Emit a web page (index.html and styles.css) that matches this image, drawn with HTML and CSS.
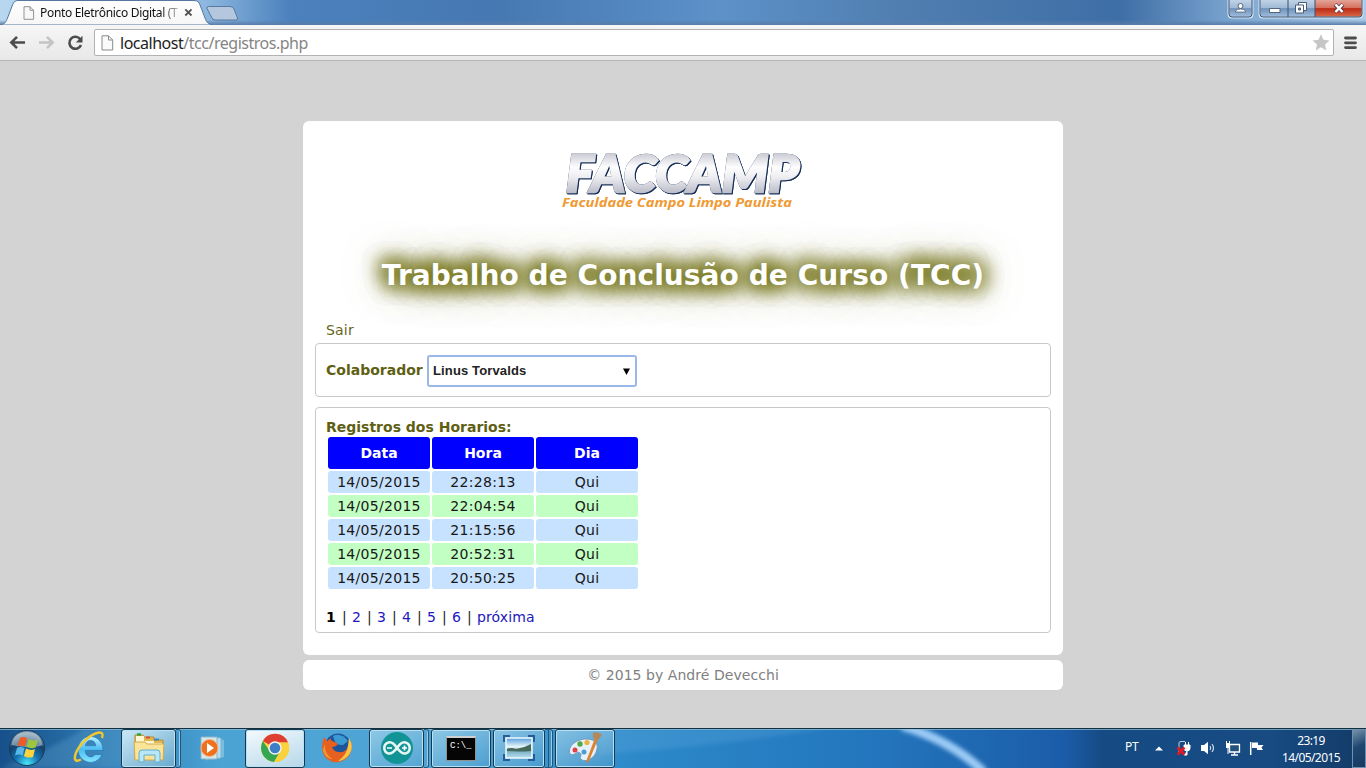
FILE: index.html
```html
<!DOCTYPE html>
<html lang="pt-BR">
<head>
<meta charset="utf-8">
<title>Ponto Eletrônico Digital (TCC)</title>
<link rel="stylesheet" href="styles.css">
</head>
<body>
<header class="browser">
  <div class="tabstrip">
    <svg class="tab-shape" width="245" height="25" viewBox="0 0 245 25">
      <defs>
        <linearGradient id="tabFill" x1="0" y1="0" x2="0" y2="1"><stop offset="0" stop-color="#fff"/><stop offset="1" stop-color="#f6f6f6"/></linearGradient>
      </defs>
      <path d="M0 25C5 24 6 22 7.500 18L12.500 5C13.500 2 15 .5 18 .5H194C197.500 .5 199 2 200 5L205 18C206.500 22 207.500 24 213 25Z" fill="url(#tabFill)" stroke="#56779f"/>
      <path d="M208.500 6.500H230Q233 6.500 234 9L237.500 18Q238 20 235.500 20H215Q212.500 20 211.500 17L207 8.500Q206.500 6.500 208.500 6.500Z" fill="#b4c7de" stroke="#58789f"/>
    </svg>
    <div class="tab">
      <svg width="12" height="14" viewBox="0 0 12 14"><path d="M1 .7H7L10.600 4.300V13.300H1ZM7 .7V4.300H10.600" fill="#f8f8f8" stroke="#929292"/></svg>
      <span class="tab-title">Ponto Eletrônico Digital (T</span>
      <svg class="tab-close" width="9" height="9" viewBox="0 0 9 9"><path d="M1.300 1.300L7.500 7.500M7.500 1.300L1.300 7.500" stroke="#555" stroke-width="1.900"/></svg>
    </div>
    <svg class="caption" width="140" height="19" viewBox="0 0 140 19">
      <defs>
        <linearGradient id="glass" x1="0" y1="0" x2="0" y2="1"><stop offset="0" stop-color="#c5d6e9"/><stop offset=".48" stop-color="#9fb9d6"/><stop offset=".52" stop-color="#6f92bb"/><stop offset="1" stop-color="#a6c2df"/></linearGradient>
        <linearGradient id="close" x1="0" y1="0" x2="0" y2="1"><stop offset="0" stop-color="#e3a397"/><stop offset=".48" stop-color="#d5705d"/><stop offset=".52" stop-color="#bd2b15"/><stop offset="1" stop-color="#d86748"/></linearGradient>
      </defs>
      <path d="M2.500 -1V14Q2.500 17.500 6 17.500H23Q26.500 17.500 26.500 14V-1Z" fill="url(#glass)" stroke="#d6e6f5" stroke-width="2"/>
      <path d="M3 -1V14Q3 17 6 17H23Q26 17 26 14V-1" fill="none" stroke="#354f70"/>
      <path d="M33.500 -1V14Q33.500 17.500 37 17.500H133Q136.500 17.500 136.500 14V-1Z" fill="url(#glass)" stroke="#d6e6f5" stroke-width="2"/>
      <path d="M89 0H135.500V13.500Q135.500 16.500 132.500 16.500H89Z" fill="url(#close)"/>
      <path d="M34 -1V14Q34 17 37 17H133Q136 17 136 14V-1M62 0V17M89 0V17" fill="none" stroke="#3c526e"/>
      <circle cx="14.500" cy="6" r="2.500" fill="#fff" stroke="#53657d"/><path d="M9.500 12V11Q11 9 14.500 9Q18 9 19.500 11V12Z" fill="#fff" stroke="#53657d" stroke-width=".8"/>
      <path d="M43.500 8.500H54V12.500H43.500Z" fill="#fff" stroke="#53657d"/>
      <path d="M72.500 2.500H80.500V10.500H72.500Z" fill="#fff" stroke="#485c76"/><path d="M69.500 5H77.500V13H69.500Z" fill="#fff" stroke="#485c76"/><path d="M72.500 8H74.500V10H72.500Z" fill="#7893b1" stroke="#485c76"/>
      <path d="M109 4.500L117 12M117 4.500L109 12" stroke="#633c45" stroke-width="4.200"/><path d="M109.500 4.500L116.500 12M116.500 4.500L109.500 12" stroke="#fff" stroke-width="2.500"/>
    </svg>
  </div>
  <nav class="toolbar">
    <svg class="nav-icon" width="17" height="15" viewBox="0 0 17 15"><path d="M16 7.500H3M8 1.800L2.300 7.500L8 13.200" fill="none" stroke="#4c4c4c" stroke-width="2.600"/></svg>
    <svg class="nav-icon" width="17" height="15" viewBox="0 0 17 15"><path d="M1 7.500H14M9 1.800L14.700 7.500L9 13.200" fill="none" stroke="#c4c4c4" stroke-width="2.600"/></svg>
    <svg class="nav-icon" width="17" height="16" viewBox="0 0 17 16"><path d="M13.300 4.300A6 6 0 1 0 14 10" fill="none" stroke="#4c4c4c" stroke-width="2.600"/><path d="M15.500 .8V7.500H8.800Z" fill="#4c4c4c"/></svg>
    <div class="address">
      <svg width="13" height="16" viewBox="0 0 13 16"><path d="M1 .8H7.500L11.700 5V15H1ZM7.500 .8V5H11.700" fill="#fafafa" stroke="#8a8a8a"/></svg>
      <span class="url"><b>localhost</b>/tcc/registros.php</span>
      <svg class="star" width="18" height="17" viewBox="0 0 18 17"><path d="M9 .3L11.500 5.800L17.500 6.400L13 10.500L14.300 16.500L9 13.300L3.700 16.500L5 10.500L.5 6.400L6.500 5.800Z" fill="#c6c6c6"/></svg>
    </div>
    <svg class="menu" width="13" height="14" viewBox="0 0 13 14"><path d="M1.500 2H11.500M1.500 6.800H11.500M1.500 11.600H11.500" stroke="#4c4c4c" stroke-width="2.800" stroke-linecap="round"/></svg>
  </nav>
</header>

<main class="page">
  <section class="card">
    <svg class="logo" width="260" height="78" viewBox="0 0 260 78" role="img" aria-label="FACCAMP">
      <defs><linearGradient id="silver" gradientUnits="userSpaceOnUse" x1="0" y1="8" x2="0" y2="48"><stop offset="0" stop-color="#c9cad3"/><stop offset=".35" stop-color="#fdfdfe"/><stop offset=".6" stop-color="#eeeef2"/><stop offset="1" stop-color="#babcc8"/></linearGradient></defs>
      <text x="13" y="46.500" textLength="233" lengthAdjust="spacingAndGlyphs" class="brand">FACCAMP</text>
      <text x="9" y="61.500" textLength="230" lengthAdjust="spacingAndGlyphs" class="tagline">Faculdade Campo Limpo Paulista</text>
    </svg>
    <h1 class="title">Trabalho de Conclusão de Curso (TCC)</h1>
    <a class="logout">Sair</a>
    <div class="box picker">
      <label class="label">Colaborador</label>
      <div class="select"><span>Linus Torvalds</span><svg width="7" height="7" viewBox="0 0 7 7"><path d="M0 .5H7L3.500 7Z" fill="#000"/></svg></div>
    </div>
    <div class="box records">
      <h2 class="label heading">Registros dos Horarios:</h2>
      <table class="times">
        <thead><tr><th>Data</th><th>Hora</th><th>Dia</th></tr></thead>
        <tbody>
          <tr><td>14/05/2015</td><td>22:28:13</td><td>Qui</td></tr>
          <tr><td>14/05/2015</td><td>22:04:54</td><td>Qui</td></tr>
          <tr><td>14/05/2015</td><td>21:15:56</td><td>Qui</td></tr>
          <tr><td>14/05/2015</td><td>20:52:31</td><td>Qui</td></tr>
          <tr><td>14/05/2015</td><td>20:50:25</td><td>Qui</td></tr>
        </tbody>
      </table>
      <div class="pager"><b>1</b><i>|</i><a>2</a><i>|</i><a>3</a><i>|</i><a>4</a><i>|</i><a>5</a><i>|</i><a>6</a><i>|</i><a class="next">próxima</a></div>
    </div>
  </section>
  <footer class="credit">© 2015 by André Devecchi</footer>
</main>

<div class="taskbar">
  <svg class="wallpaper" width="1366" height="40" viewBox="0 0 1366 40">
    <defs>
      <linearGradient id="sky"><stop offset="0" stop-color="#17508a"/><stop offset=".09" stop-color="#2f7fb8"/><stop offset=".16" stop-color="#4ba3d4"/><stop offset=".3" stop-color="#4fa5d5"/><stop offset=".47" stop-color="#2c88c8"/><stop offset=".64" stop-color="#2376bd"/><stop offset=".78" stop-color="#1b5ca8"/><stop offset=".808" stop-color="#164a83"/><stop offset=".93" stop-color="#174b82"/><stop offset="1" stop-color="#133a66"/></linearGradient>
      <filter id="soft" x="-20%" y="-50%" width="140%" height="200%"><feGaussianBlur stdDeviation="2"/></filter>
    </defs>
    <rect width="1366" height="40" fill="url(#sky)"/>
    <path d="M0 40Q55 20 85 0H180L120 40Z" fill="#8ccbe9" opacity=".2" filter="url(#soft)"/>
    <path d="M600 26Q700 20 830 0H600Z" fill="#70b5e5" opacity=".22" filter="url(#soft)"/>
    <path d="M902 -2Q950 12 984 44" fill="none" stroke="#9bcbf6" stroke-width="9" filter="url(#soft)"/>
    <path d="M0 .5H1366" stroke="#12303e"/><path d="M0 1.500H1366" stroke="#8bbbd6" opacity=".75"/>
  </svg>
  <div class="apps">
    <div class="app start"><svg width="38" height="38" viewBox="0 0 38 38">
      <defs><radialGradient id="orb" cx=".5" cy=".95" r=".85"><stop offset="0" stop-color="#49e8fa"/><stop offset=".4" stop-color="#1574b1"/><stop offset=".75" stop-color="#153f69"/><stop offset="1" stop-color="#7895ab"/></radialGradient></defs>
      <circle cx="19" cy="19" r="17.500" fill="url(#orb)" stroke="#173b5b"/><path d="M3.500 16Q6 3 19 3Q32 3 34.500 16Q25 20 3.500 16Z" fill="#d5e1e9" opacity=".48"/>
      <path d="M12 9Q15 7 19 9.500L17 17.500Q13 15.500 9.500 17.500Z" fill="#f05a24"/><path d="M20.500 10Q25 12.500 30 10.500L27.500 18.500Q23 20 18.500 18Z" fill="#9dc63c"/><path d="M9 19Q12 17 16.500 19L14.500 26.500Q11 24.500 7 26.500Z" fill="#58b6e9"/><path d="M18 19.500Q23 22 27 20L25 28Q20 29.500 16 27Z" fill="#ffd33c"/>
    </svg></div>
    <div class="app ie"><svg width="34" height="36" viewBox="0 0 34 36">
      <defs><linearGradient id="ieb" x1="0" y1="0" x2="0" y2="1"><stop offset="0" stop-color="#b9f1ff"/><stop offset=".5" stop-color="#4cbcf1"/><stop offset="1" stop-color="#85e5ff"/></linearGradient></defs>
      <path fill-rule="evenodd" d="M31 19.500A12.500 13 0 1 0 30 24.500H23Q21 27.500 17.800 26.800Q13.500 25.800 13.200 20.500H31ZM13.300 15.800Q14.500 10.500 18.500 10.500Q23 10.500 23.800 15.800Z" fill="url(#ieb)" stroke="#2479b8" stroke-width=".7"/>
      <path d="M30 8Q32 2 27 2.500C17 4 5 17 3 26C2 31.500 5 31.500 9 29.500" fill="none" stroke="#f3c72d" stroke-width="2.400"/>
    </svg></div>
    <div class="app explorer framed light"><svg width="34" height="30" viewBox="0 0 34 30">
      <path d="M3 4V2H11L12 4H22V7H31V26H3Z" fill="#e4b64e" stroke="#b88d32"/><path d="M4 3H12V8H22V10H30V15H4Z" fill="#fff7d4"/><path d="M5 1.500H9" stroke="#31a349" stroke-width="2.500"/><path d="M14 4.500H18" stroke="#ce543a" stroke-width="2"/><path d="M22 6.500H27" stroke="#3e88ba" stroke-width="2"/>
      <path d="M2 9H13L15 11H32L31 27H3Z" fill="#f9e49a" stroke="#d3aa4b"/><path d="M7 29V20Q7 17 10 17H25Q28 17 28 20V29H23V22H12V29Z" fill="#b8e7f7" stroke="#62aece"/>
    </svg></div><div class="stack"></div>
    <div class="app wmp"><svg width="32" height="26" viewBox="0 0 32 26"><path d="M12 3L27 5V22L12 25Z" fill="#79bde2"/><path d="M9 2L24 3V23L9 25Z" fill="#b9dfef" stroke="#78b3d0"/><path d="M4 2H20V24H4Z" fill="#d4e9ef" stroke="#86b4c7"/><circle cx="12.500" cy="13" r="8.500" fill="#ee7120" stroke="#f7b282"/><path d="M10 8V18L17 13Z" fill="#fff"/></svg></div>
    <div class="app chrome framed active"><svg width="30" height="30" viewBox="0 0 30 30"><circle cx="15" cy="15" r="14" fill="#ffd43b"/><path d="M15 15L2.900 8A14 14 0 0 1 28.100 9.500H15Z" fill="#df3e32"/><path d="M2.900 8A14 14 0 0 0 14 29L21 17.500L15 15L9 17Z" fill="#35a652"/><path d="M28 9.500H16L21 17.500L14 29A14 14 0 0 0 28 9.500" fill="#fbd13c"/><circle cx="15" cy="15" r="6.700" fill="#f4f4ee"/><circle cx="15" cy="15" r="5.300" fill="#3c7fc8"/></svg></div>
    <div class="app firefox"><svg width="32" height="32" viewBox="0 0 32 32"><circle cx="17" cy="14.500" r="13" fill="#1d559d"/><path d="M12 4Q20 0 27 9L22 13Q14 14 12 4Z" fill="#3a9bd2"/><path d="M29 8Q33 16 28 24Q17 35 6 27Q-2 19 3 5L6 9L10 6Q9 9 14 10L17 12Q15 15 11 15Q13 20 18 20Q25 21 27 14Z" fill="#e66020"/><path d="M28 6Q34 16 27 24Q22 29 17 29Q26 23 27 14Z" fill="#f7c642"/><path d="M4 12Q3 23 12 27Q4 27 2 18Z" fill="#f39a2d"/></svg></div>
    <div class="app arduino framed"><svg width="32" height="32" viewBox="0 0 32 32"><circle cx="16" cy="16" r="16" fill="#129497"/><path d="M16 16C12 10 9 10 7.500 10.500A5.700 5.700 0 0 0 7.500 21.500C11 22 13 20 16 16C20 10 23 10 24.500 10.500A5.700 5.700 0 0 1 24.500 21.500C21 22 19 20 16 16Z" fill="none" stroke="#e8f6f2" stroke-width="2.600"/><path d="M6 16H11M21 16H26M23.500 13.500V18.500" stroke="#fff" stroke-width="1.700"/></svg></div><div class="stack"></div>
    <div class="app command framed"><div class="console"><span>C:\_</span></div></div>
    <div class="app photo framed"><svg width="32" height="26" viewBox="0 0 32 26"><defs><linearGradient id="lake" x1="0" y1="0" x2="0" y2="1"><stop offset="0" stop-color="#539ddd"/><stop offset=".45" stop-color="#edf9fb"/><stop offset=".6" stop-color="#6ea9c0"/><stop offset="1" stop-color="#b9e0f0"/></linearGradient></defs><path d="M7 1H1V7M25 1H31V7M31 19V25H25M7 25H1V19" fill="none" stroke="#245e99" stroke-width="2"/><path d="M3 3H29V23H3Z" fill="url(#lake)" stroke="#eef8fb" stroke-width="1.500"/><path d="M4 14Q8 12 13 14Q21 13 28 9V16Q16 17 4 16Z" fill="#466a59"/></svg></div><div class="stack double"></div>
    <div class="app paint framed"><svg width="34" height="32" viewBox="0 0 34 32"><path d="M2 22C-1 14 9 7 18 7C28 7 30 12 29 17C27 27 18 30 14 28C10 26 15 23 12 21C9 18 6 25 2 22Z" fill="#e5f1fb" stroke="#739bb9"/><circle cx="7" cy="18" r="2.500" fill="#df4144"/><circle cx="12" cy="12" r="2.700" fill="#56a845"/><circle cx="19" cy="10.500" r="2.600" fill="#efb13f"/><circle cx="16" cy="20" r="2.500" fill="#4b9cd3"/><path d="M30 7L21 29L18 31L19 27L27 6Z" fill="#dc832f"/><path d="M25 1Q30 -1 34 3L30 8L25 6Z" fill="#b5885a"/></svg></div>
  </div>
  <div class="tray">
    <span class="language">PT</span>
    <svg class="up" width="8" height="5" viewBox="0 0 8 5"><path d="M0 4.500L4 .5L8 4.500Z" fill="#fff"/></svg>
    <svg class="power" width="16" height="16" viewBox="0 0 16 16"><path d="M3 14V3Q3 1.500 5 1.500H9" fill="none" stroke="#c3d0dc"/><path d="M8 5H14V8Q14 11 11 11Q8 11 8 8ZM9.500 2V5M12.500 2V5M11 11V15H8" fill="#fff" stroke="#fff"/><path d="M1.500 7.500L8.500 14.500M8.500 7.500L1.500 14.500" stroke="#e01823" stroke-width="2.700"/></svg>
    <svg class="speaker" width="16" height="14" viewBox="0 0 16 14"><path d="M1 4H4L8 .8V13.200L4 10H1Z" fill="#fff"/><path d="M10 5Q11.500 7 10 9M12 3Q15 7 12 11" fill="none" stroke="#d3e0ed" stroke-width="1.200"/></svg>
    <svg class="network" width="16" height="15" viewBox="0 0 16 15"><path d="M4.500 3.500H14.500V11H4.500ZM9.500 11V14M6 14H13" fill="#23517e" stroke="#fff" stroke-width="1.300"/><path d="M1 2H5V7H1Z" fill="#fff"/><path d="M1.500 0V2M4.500 0V2M3 7V13" stroke="#fff"/></svg>
    <svg class="flag" width="16" height="15" viewBox="0 0 16 15"><path d="M1.700 1V14" stroke="#fff" stroke-width="1.500"/><path d="M3 1.500H9V4H14.500L12.500 6.500L14 9H8V7H3Z" fill="#fff"/></svg>
    <div class="clock"><span>23:19</span><span>14/05/2015</span></div>
    <div class="desktop"></div>
  </div>
</div>
</body>
</html>
```
FILE: styles.css
```css
* { box-sizing: border-box; }
body { margin: 0; width: 1366px; height: 768px; overflow: hidden; display: flex; flex-direction: column; background: #d3d3d3; font: 14px/17px "DejaVu Sans", sans-serif; }
svg { display: block; flex: none; }

.browser { height: 61px; flex: none; position: relative; }
.tabstrip { position: relative; height: 25px; display: flex; justify-content: space-between; background: linear-gradient(180deg, transparent 80%, #587da8 100%), linear-gradient(90deg, #b8d7ef 0, #8db7df 205px, #4b81bd 290px, #4678b2 500px, #5d91c8 720px, #507eb1 900px, #3e6ea6 1120px, #7fa8d2 1240px, #a9c9e6 1366px); }
.tab-shape { position: absolute; left: 0; top: 0; }
.tab { position: relative; display: flex; align-items: center; height: 25px; padding-left: 23px; }
.tab-title { width: 139px; margin-left: 5px; overflow: hidden; white-space: nowrap; font: 12px/16px "Noto Sans", sans-serif; letter-spacing: -.32px; background: linear-gradient(90deg, #111 121px, #bbb 138px); background-clip: text; color: transparent; }
.tab-close { margin-left: 5px; }
.toolbar { height: 36px; display: flex; align-items: center; padding-left: 9px; border-bottom: 1px solid #b5b5b5; background: linear-gradient(#f6f6f6, #e8e8e8); }
.nav-icon { margin-right: 12px; }
.address { width: 1240px; height: 27px; margin-left: -2px; padding: 0 3px 0 6px; display: flex; align-items: center; border: 1px solid #b2b2b2; border-radius: 2px; background: #fff; }
.url { margin-left: 6px; flex: 1; font: 16px/20px "Noto Sans", sans-serif; letter-spacing: -.48px; color: #858585; }
.url b { font-weight: 400; color: #222; }
.menu { margin-left: 10px; }

.page { height: 667px; flex: none; display: flex; flex-direction: column; align-items: center; padding-top: 60px; }
.card { width: 760px; height: 534px; padding: 24px 12px 0; border-radius: 6px; background: #fff; display: flex; flex-direction: column; }
.logo { margin: 0 0 0 238px; }
.brand { font: italic 900 52px Lato, sans-serif; fill: url(#silver); stroke: url(#silver); stroke-width: 2.6px; filter: drop-shadow(0 0 .5px #142c56) drop-shadow(1.5px 1px 0 #142c56); }
.tagline { font: italic 700 13px "Noto Sans", sans-serif; fill: #ef9a33; }
.title { margin: 33px 0 0; height: 40px; text-align: center; white-space: nowrap; font: 700 28px/40px "DejaVu Sans", sans-serif; letter-spacing: .07px; color: #fff; text-shadow: 0 0 20px #686800, 0 0 20px #686800, 0 0 20px #686800, 0 0 20px #686800a0, 0 0 40px #686800; }
.logout { margin: 26px 0 0 11px; height: 21px; line-height: 17px; letter-spacing: .2px; color: #65651c; }
.box { border: 1px solid #c9c9c9; border-radius: 4px; background: #fff; padding-left: 10px; flex: none; }
.picker { height: 54px; display: flex; align-items: center; }
.label { margin: 0; font-size: 14px; font-weight: 700; color: #5f5f13; white-space: nowrap; }
.picker .label { width: 101px; }
.select { width: 210px; height: 32px; margin-top: 2px; padding: 0 5px 0 4px; display: flex; justify-content: space-between; align-items: center; border: 2px solid #9ab8e7; border-radius: 3px; background: #fff; font: 700 13px/16px "Liberation Sans", sans-serif; letter-spacing: .13px; color: #222; }
.records { height: 226px; margin-top: 10px; padding-top: 11px; }
.heading { height: 16px; }
.times { border-spacing: 2px; table-layout: fixed; width: 314px; }
.times th, .times td { padding: 0; border-radius: 3px; text-align: center; }
.times th { height: 32px; background: #00f; color: #fff; }
.times td { height: 22px; background: #c7e2ff; color: #171717; letter-spacing: .3px; }
.times tbody tr:nth-child(even) td { background: #c2ffc2; }
.pager { margin-top: 18px; display: flex; color: #222; white-space: nowrap; }
.pager b { width: 16px; color: #000; }
.pager i { width: 10px; font-style: normal; }
.pager a { width: 15px; color: #2118bd; }
.pager .next { width: auto; letter-spacing: .1px; }
.credit { width: 760px; height: 30px; margin-top: 5px; border-radius: 6px; background: #fff; color: #808080; line-height: 30px; letter-spacing: .05px; text-align: center; }

.taskbar { position: relative; height: 40px; flex: none; display: flex; justify-content: space-between; }
.wallpaper { position: absolute; left: 0; top: 0; }
.apps { position: relative; display: flex; align-items: center; }
.app { height: 39px; display: flex; align-items: center; justify-content: center; flex: none; }
.framed { border: 1px solid #163950; border-radius: 3px; box-shadow: inset 0 0 0 1px #b7e0f4; background: linear-gradient(155deg, #b8dff199, #5ba5ce55); }
.light { background: linear-gradient(145deg, #cce8f6, #67a9cd); }
.active { background: linear-gradient(160deg, #f4fafd, #b5d7e9); }
.stack { width: 5px; height: 39px; border: solid #245777; border-width: 1px 1px 1px 0; border-radius: 0 3px 3px 0; box-shadow: inset -1px 0 #9fcce4; flex: none; }
.stack.double { width: 8px; background: linear-gradient(90deg, transparent 3px, #245777 3px 4px, transparent 4px); }
.start { width: 38px; margin-left: 8px; }
.ie { width: 34px; margin-left: 26px; }
.explorer { width: 55px; margin-left: 15px; }
.wmp { width: 32px; margin-left: 16px; }
.chrome { width: 60px; margin-left: 16px; }
.firefox { width: 32px; margin-left: 16px; }
.arduino { width: 55px; margin-left: 16px; }
.command { width: 60px; margin-left: 2px; }
.photo { width: 52px; margin-left: 2px; }
.paint { width: 60px; margin-left: 2px; }
.console { width: 30px; height: 25px; padding: 4px 0 0 3px; border: 1px solid #929292; border-top: 2px solid #ced1d3; background: #050505; color: #fff; font: 9px/9px "Liberation Mono", monospace; }
.tray { position: relative; display: flex; align-items: center; color: #fff; font: 12px/17px "Noto Sans", sans-serif; letter-spacing: -.6px; }
.language { width: 30px; height: 21px; letter-spacing: -.2px; }
.up { margin-right: 13px; }
.power { margin-right: 8px; }
.speaker { margin-right: 9px; }
.network { margin-right: 8px; }
.clock { width: 76px; margin-left: 8px; padding-top: 1px; display: flex; flex-direction: column; text-align: center; }
.desktop { width: 14px; height: 39px; margin-left: 3px; border: 1px solid #6f91ad; background: linear-gradient(155deg, #7792aa, #1f4771 45%, #173b62); }
```
